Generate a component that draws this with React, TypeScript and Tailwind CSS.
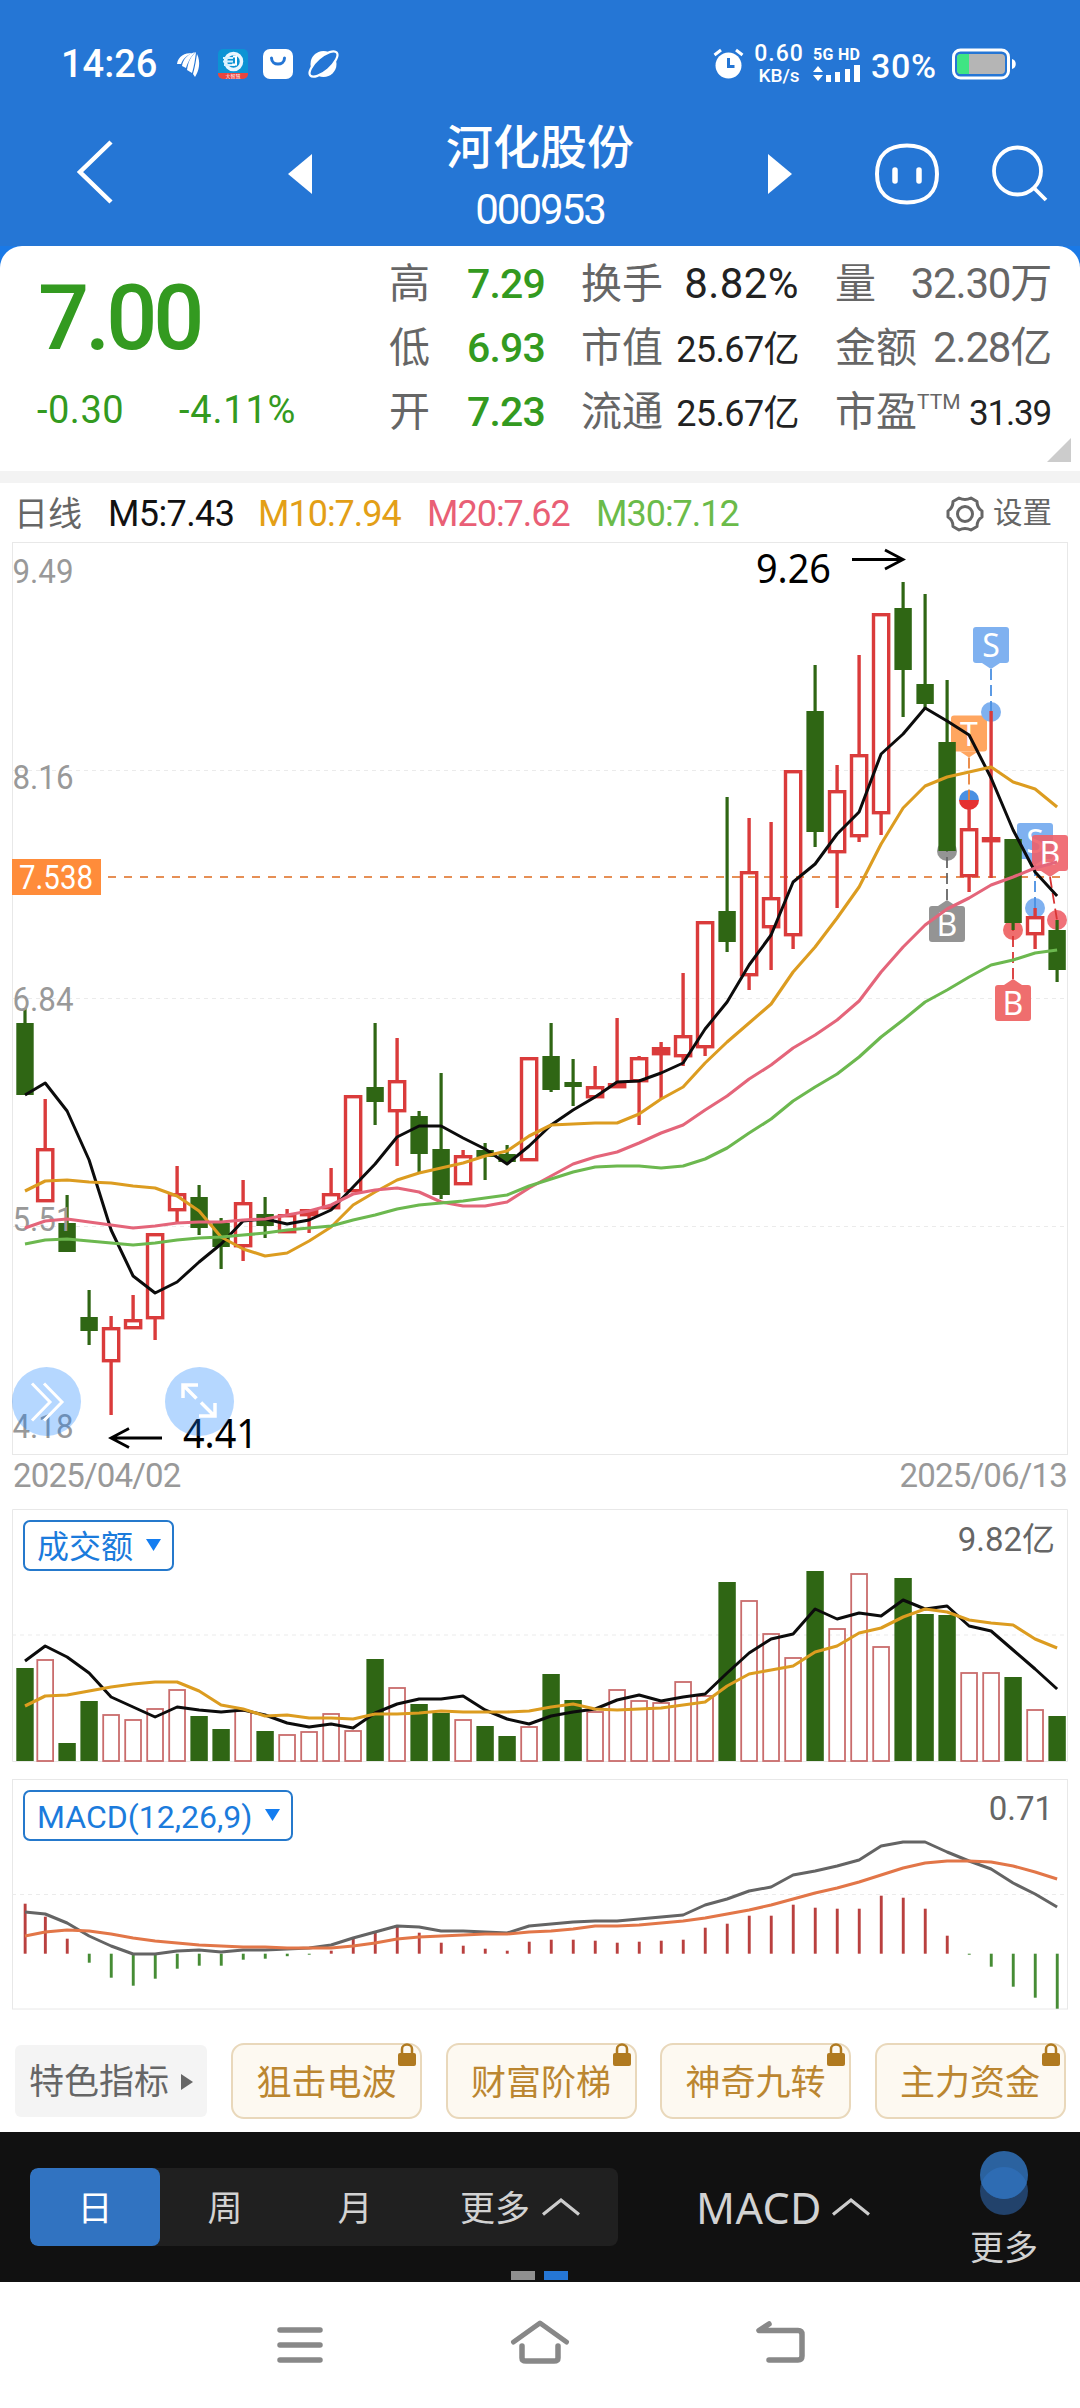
import React from 'react';

type Candle = [high: number, top: number, bottom: number, low: number, up: 0 | 1];

const candles: Candle[] = [
  [1008, 1023, 1095, 1095, 0], [1099, 1148, 1202, 1202, 1], [1195, 1223, 1252, 1252, 0], [1290, 1317, 1331, 1345, 0],
  [1316, 1327, 1362, 1415, 1], [1295, 1319, 1329, 1329, 1], [1233, 1233, 1319, 1340, 1], [1166, 1193, 1211, 1222, 1],
  [1185, 1197, 1228, 1235, 0], [1218, 1223, 1247, 1269, 0], [1180, 1202, 1247, 1261, 1], [1197, 1214, 1226, 1238, 0],
  [1209, 1214, 1233, 1233, 1], [1209, 1209, 1216, 1233, 1], [1168, 1193, 1209, 1209, 1], [1095, 1095, 1192, 1192, 1],
  [1023, 1087, 1102, 1125, 0], [1038, 1080, 1112, 1166, 1], [1111, 1116, 1154, 1172, 0], [1073, 1149, 1195, 1199, 0],
  [1150, 1155, 1185, 1185, 1], [1143, 1150, 1157, 1180, 0], [1145, 1154, 1162, 1162, 0], [1057, 1057, 1161, 1161, 1],
  [1023, 1056, 1090, 1092, 0], [1059, 1082, 1087, 1106, 0], [1066, 1086, 1098, 1098, 1], [1018, 1083, 1088, 1088, 1],
  [1056, 1057, 1082, 1125, 1], [1042, 1047, 1055, 1099, 1], [973, 1035, 1057, 1066, 1], [921, 921, 1048, 1056, 1],
  [797, 911, 942, 952, 0], [818, 871, 976, 990, 1], [822, 897, 928, 970, 1], [770, 770, 936, 949, 1],
  [665, 711, 832, 847, 0], [765, 790, 853, 908, 1], [655, 754, 837, 842, 1], [613, 613, 814, 835, 1],
  [582, 608, 670, 717, 0], [594, 684, 704, 709, 0], [680, 742, 851, 851, 0], [809, 828, 877, 892, 1],
  [711, 837, 842, 878, 1], [839, 839, 923, 930, 0], [908, 916, 935, 949, 1], [920, 930, 970, 982, 0],
];

const ma5 = [1095, 1083, 1111, 1160, 1230, 1276, 1293, 1282, 1262, 1244, 1221, 1219, 1224, 1220, 1210, 1187, 1164, 1137, 1126, 1126, 1138, 1149, 1164, 1146, 1125, 1110, 1097, 1082, 1081, 1073, 1063, 1029, 1002, 965, 935, 882, 864, 834, 812, 754, 734, 708, 721, 735, 778, 830, 872, 896];
const ma10 = [1191, 1181, 1180, 1182, 1183, 1186, 1188, 1196, 1211, 1237, 1249, 1256, 1253, 1241, 1227, 1205, 1192, 1180, 1173, 1168, 1163, 1156, 1151, 1136, 1125, 1124, 1123, 1123, 1114, 1099, 1087, 1063, 1042, 1023, 1004, 972, 947, 918, 887, 844, 808, 786, 777, 772, 767, 782, 789, 807];
const ma20 = [1228, 1221, 1219, 1222, 1225, 1228, 1226, 1223, 1222, 1222, 1220, 1219, 1215, 1211, 1205, 1194, 1190, 1188, 1192, 1202, 1206, 1206, 1202, 1188, 1176, 1164, 1157, 1152, 1143, 1133, 1125, 1110, 1096, 1079, 1065, 1048, 1035, 1020, 1001, 972, 947, 925, 909, 898, 885, 877, 868, 862];
const ma30 = [1244, 1240, 1239, 1241, 1243, 1245, 1243, 1240, 1238, 1237, 1235, 1233, 1230, 1228, 1226, 1220, 1215, 1209, 1205, 1203, 1201, 1198, 1195, 1186, 1179, 1172, 1167, 1166, 1166, 1168, 1166, 1159, 1148, 1133, 1119, 1101, 1087, 1074, 1057, 1037, 1020, 1002, 990, 977, 965, 960, 953, 950];

const volumes = [1668, 1659, 1743, 1701, 1714, 1719, 1708, 1689, 1716, 1729, 1710, 1731, 1734, 1731, 1713, 1730, 1659, 1687, 1704, 1713, 1719, 1726, 1736, 1726, 1674, 1700, 1711, 1689, 1700, 1702, 1681, 1695, 1582, 1600, 1633, 1657, 1571, 1628, 1573, 1646, 1578, 1614, 1615, 1672, 1672, 1677, 1709, 1716];
const vol5 = [1661, 1646, 1657, 1673, 1697, 1707, 1717, 1707, 1710, 1712, 1710, 1715, 1723, 1727, 1724, 1728, 1713, 1704, 1699, 1699, 1696, 1710, 1719, 1724, 1716, 1712, 1709, 1700, 1695, 1701, 1697, 1694, 1673, 1653, 1639, 1634, 1609, 1619, 1613, 1616, 1600, 1609, 1606, 1626, 1631, 1650, 1669, 1689];
const vol10 = [1706, 1696, 1695, 1691, 1687, 1684, 1682, 1682, 1691, 1705, 1709, 1716, 1715, 1718, 1718, 1719, 1714, 1714, 1713, 1711, 1712, 1712, 1712, 1711, 1707, 1704, 1709, 1710, 1709, 1708, 1705, 1702, 1686, 1674, 1670, 1666, 1652, 1646, 1633, 1628, 1617, 1609, 1612, 1620, 1623, 1625, 1639, 1648];

const macd = [50, 37, 15, -9, -24, -32, -25, -15, -12, -12, -6, -5, -2.5, -1, 3, 15, 22, 28, 21, 11, 8, 5, 3, 12, 14, 14, 13, 11, 12, 13, 14, 26, 30, 38, 38, 49, 46, 45, 45, 58, 56, 45, 18, -1, -13, -33, -44, -55];
const dif = [133, 135, 144, 157, 167, 175, 175, 172, 171, 173, 171, 171, 170, 169, 166, 159, 153, 147, 148, 152, 152, 153, 154, 147, 145, 143, 142, 142, 140, 138, 136, 126, 120, 112, 108, 96, 92, 87, 81, 67, 63, 63, 73, 82, 90, 104, 115, 128];
const dea = [157, 153, 151, 152, 155, 159, 162, 164, 166, 167, 168, 168, 169, 169, 169, 167, 164, 160, 158, 157, 156, 155, 155, 153, 152, 150, 147, 147, 146, 144, 142, 139, 135, 131, 126, 120, 114, 109, 103, 96, 89, 84, 82, 82, 83, 87, 93, 100];

const UP = '#da3b3b';
const DOWN = '#2f6614';

const xAt = (i: number) => (i === 0 ? 25 : i === 1 ? 45.2 : 67.1 + 22 * (i - 2));
const points = (ys: number[]) => ys.map((y, i) => `${xAt(i)},${y}`).join(' ');

function Line({ ys, color, width = 2.6 }: { ys: number[]; color: string; width?: number }) {
  return <polyline points={points(ys)} fill="none" stroke={color} strokeWidth={width} strokeLinejoin="round" />;
}

function Grid({ y }: { y: number }) {
  return <line x1="12" x2="1067" y1={y} y2={y} stroke="#ebebeb" strokeWidth="1" strokeDasharray="4 4" />;
}

interface MarkerProps {
  x: number;
  y: number;
  dotX: number;
  dotY: number;
  label: string;
  fill: string;
  stroke: string;
}

function Marker({ x, y, dotX, dotY, label, fill, stroke }: MarkerProps) {
  const below = dotY > y;
  const edge = below ? y + 36 : y;
  const tip = below ? edge + 6 : edge - 6;
  return (
    <g>
      {label === 'T' ? (
        <>
          <path d={`M${dotX - 10} ${dotY}a10 10 0 0 1 20 0z`} fill="#4a90e2" />
          <path d={`M${dotX - 10} ${dotY}a10 10 0 0 0 20 0z`} fill="#e53030" />
        </>
      ) : (
        <circle cx={dotX} cy={dotY} r="10" fill={fill} />
      )}
      <line x1={x + 18} y1={tip} x2={dotX} y2={dotY} stroke={stroke} strokeWidth="1.8" strokeDasharray="11 5" />
      <rect x={x} y={y} width="36" height="36" rx="3" fill={fill} />
      <path d={`M${x + 9} ${edge}L${x + 18} ${tip}L${x + 27} ${edge}z`} fill={fill} />
      <text x={x + 18} y={y + 30} fontSize="32" fill="#fff" textAnchor="middle" fontFamily="Noto Sans, sans-serif">
        {label}
      </text>
    </g>
  );
}

function AxisLabel({ y, children }: { y: number; children: string }) {
  return (
    <text x="12.5" y={y} fontSize="33.5" fill="#999" textLength="61" lengthAdjust="spacingAndGlyphs">
      {children}
    </text>
  );
}

function PriceChart() {
  return (
    <svg className="block font-['Roboto',sans-serif]" width="1080" height="926" viewBox="0 537 1080 926">
      <rect x="12.5" y="542.5" width="1055" height="912" fill="none" stroke="#e8e8e8" />
      <Grid y={770.5} />
      <Grid y={998.5} />
      <Grid y={1226.5} />
      <line x1="108" x2="1060" y1="877" y2="877" stroke="#e68f55" strokeWidth="2" strokeDasharray="8 8" />

      <Marker x={929} y={906} dotX={947} dotY={851} label="B" fill="#949494" stroke="#666" />
      <Marker x={951} y={715.5} dotX={969} dotY={800} label="T" fill="#ffa660" stroke="#e8833a" />
      <Marker x={973} y={627} dotX={991} dotY={712} label="S" fill="#7fb1f0" stroke="#4a90e2" />
      <Marker x={1017} y={823} dotX={1035} dotY={908} label="S" fill="#7fb1f0" stroke="#4a90e2" />
      <Marker x={995} y={985} dotX={1013} dotY={930} label="B" fill="#ef6e6e" stroke="#d93434" />
      <Marker x={1032} y={835} dotX={1057} dotY={920} label="B" fill="#ee6069e6" stroke="#d93434" />

      {candles.map(([high, top, bottom, low, up], i) => {
        const x = xAt(i);
        if (up) {
          return (
            <g key={i} stroke={UP} strokeWidth="3.4">
              <line x1={x} x2={x} y1={high} y2={top + 1} />
              <line x1={x} x2={x} y1={bottom - 1} y2={low} />
              <rect
                x={x - 7.6}
                y={top + 1.7}
                width="15.2"
                height={Math.max(bottom - top - 3, 1)}
                fill={bottom - top < 9 ? UP : 'none'}
              />
            </g>
          );
        }
        return (
          <g key={i} fill={DOWN}>
            <rect x={x - 1.6} y={high} width="3.2" height={low - high} />
            <rect x={x - 8.7} y={top} width="17.4" height={bottom - top} />
          </g>
        );
      })}

      <AxisLabel y={583}>9.49</AxisLabel>
      <AxisLabel y={789}>8.16</AxisLabel>
      <AxisLabel y={1011}>6.84</AxisLabel>
      <AxisLabel y={1231}>5.51</AxisLabel>
      <AxisLabel y={1438}>4.18</AxisLabel>

      <Line ys={ma5} color="#0c0c0c" width={3} />
      <Line ys={ma10} color="#dc9c20" width={3.1} />
      <Line ys={ma20} color="#e4657a" width={3.1} />
      <Line ys={ma30} color="#6cb84f" width={3.1} />

      <rect x="12" y="859" width="89" height="36" fill="#ff8c3a" />
      <text x="19" y="889" fontSize="33" fill="#fff" textLength="74" lengthAdjust="spacingAndGlyphs">7.538</text>

      <g stroke="#000" strokeWidth="2.8" fill="none">
        <path d="M852 559.5H902M885 550l18 9.500l-18 9.500" />
        <path d="M162 1438H112M129 1428.500l-18 9.500l18 9.500" />
      </g>
      <g className="font-['Noto_Sans',sans-serif]" fontSize="40" fill="#000">
        <text x="756" y="583" textLength="75" lengthAdjust="spacingAndGlyphs">9.26</text>
        <text x="183" y="1448" textLength="75" lengthAdjust="spacingAndGlyphs">4.41</text>
      </g>

      <circle cx="46.500" cy="1401.500" r="34.500" fill="#0a7aff" fillOpacity="0.3" />
      <circle cx="199.500" cy="1401.500" r="34.500" fill="#0a7aff" fillOpacity="0.3" />
      <g stroke="#fff" strokeWidth="3" fill="none">
        <path d="M32 1383.500l18 18.500l-18 18.500M44 1383.500l18 18.500l-18 18.500" />
        <path strokeWidth="3.500" d="M183 1398v-13h15M184 1386l12.500 12.500M215 1403v13h-16M201 1402.500l13 13" />
      </g>
    </svg>
  );
}

function VolumeChart() {
  return (
    <svg className="block" width="1080" height="253" viewBox="0 1509 1080 253">
      <path d="M12.5 1761.500V1509.500H1067.500V1761.500z" fill="none" stroke="#e8e8e8" />
      <Grid y={1635} />
      {volumes.map((top, i) =>
        candles[i][4] ? (
          <rect key={i} x={xAt(i) - 7.9} y={top + 1} width="15.8" height={1760 - top} fill="none" stroke="#c96c6c" strokeWidth="1.8" />
        ) : (
          <rect key={i} x={xAt(i) - 8.7} y={top} width="17.4" height={1761 - top} fill={DOWN} />
        )
      )}
      <Line ys={vol5} color="#0c0c0c" width={3} />
      <Line ys={vol10} color="#dc9c20" width={3.1} />
    </svg>
  );
}

function MacdChart() {
  return (
    <svg className="block" width="1080" height="231" viewBox="0 0 1080 231">
      <rect x="12.5" y="0.5" width="1055" height="229.5" fill="none" stroke="#e8e8e8" />
      <Grid y={115.5} />
      {macd.map((v, i) => (
        <rect
          key={i}
          x={xAt(i) - 1.3}
          y={v > 0 ? 174.7 - v : 174.7}
          width="2.9"
          height={Math.abs(v)}
          fill={v > 0 ? '#b9403f' : '#468c35'}
        />
      ))}
      <Line ys={dif} color="#646464" width={3} />
      <Line ys={dea} color="#e27648" width={3} />
    </svg>
  );
}

function StatusBar() {
  return (
    <div className="flex h-[100px] items-end pb-[16px] pl-[61px] pr-[62px] text-white">
      <div className="flex h-10 items-center">
        <span className="w-[116px] text-[38px] font-medium leading-none">14:26</span>
        <svg width="24" height="28" viewBox="0 0 24 28" fill="#fff">
          <path d="M0 14C1 6 8 3 15 3C9 6 6 9 4 14z" />
          <path d="M5 16C6 9 11 4 18 2C13 8 11 12 9 18z" />
          <path d="M10 20C11 12 14 6 19 2C18 10 17 16 15 23z" />
          <path d="M16 24C18 17 19 10 20 4C24 12 22 21 18 27z" />
        </svg>
        <svg className="ml-[17px]" width="30" height="30" viewBox="0 0 30 30">
          <rect width="30" height="30" rx="5" fill="#0c93d4" />
          <path d="M0 24h30v1a5 5 0 0 1-5 5H5a5 5 0 0 1-5-5z" fill="#e8453f" />
          <circle cx="15.500" cy="12.500" r="8" fill="none" stroke="#e8f6ff" strokeWidth="3.500" />
          <path d="M5 9h10M5 12.500h10M6 16h11" stroke="#d4effd" strokeWidth="2" fill="none" />
          <path d="M15 7.500h3v8h-4" stroke="#fff" strokeWidth="2" fill="none" />
          <text x="15" y="29" fontSize="5" fill="#fff" textAnchor="middle" fontFamily="Noto Sans CJK SC, sans-serif">大智慧</text>
        </svg>
        <svg className="ml-[15px]" width="30" height="30" viewBox="0 0 30 30">
          <rect width="30" height="30" rx="7" fill="#fff" />
          <path d="M8.500 9c0 8 13 8 13 0" fill="none" stroke="#2475d4" strokeWidth="3" strokeLinecap="round" />
        </svg>
        <svg className="ml-[15px]" width="32" height="30" viewBox="0 0 32 30">
          <circle cx="15.500" cy="15" r="13" fill="#fff" />
          <ellipse cx="15.500" cy="15" rx="17.500" ry="7" fill="#2576d5" stroke="#fff" strokeWidth="2.200" transform="rotate(-41 15.500 15)" />
        </svg>
      </div>
      <div className="ml-auto flex h-10 items-center">
        <svg className="mr-[10px]" width="31" height="32" viewBox="0 0 31 32">
          <circle cx="15.500" cy="17.500" r="13" fill="#fff" />
          <path d="M1.500 7L8 2M29.500 7L23 2" stroke="#fff" strokeWidth="3" />
          <path d="M15.500 10v8.500h6" stroke="#2475d4" strokeWidth="3" fill="none" />
        </svg>
        <div className="flex w-[50px] flex-col items-center font-medium">
          <span className="text-[23px] leading-[24px] tracking-[1px]">0.60</span>
          <span className="text-[19px] leading-[20px]">KB/s</span>
        </div>
        <div className="ml-[9px] w-[50px]">
          <div className="whitespace-nowrap text-[16px] font-bold leading-[17px] tracking-[0.3px]">5G HD</div>
          <svg className="mt-[2px]" width="48" height="17" viewBox="0 0 48 17" fill="#fff">
            <path d="M0 7l5-6l5 6zM0 10h10l-5 6zM13 10h5v7h-5zM22 7h5v10h-5zM32 4h5v13h-5zM41 0h6v17h-6z" />
          </svg>
        </div>
        <span className="ml-[8px] w-[75px] pt-[4px] text-[34px] font-medium leading-none tracking-[0.7px]">30%</span>
        <svg className="ml-[6px]" width="66" height="32" viewBox="0 0 66 32">
          <rect x="1.500" y="2" width="55" height="28" rx="7" fill="none" stroke="#fff" strokeWidth="3" />
          <path d="M60 11c5 1 5 9 0 10z" fill="#fff" />
          <rect x="5" y="6" width="48" height="20" rx="4" fill="#b5b5b5" />
          <path d="M9 6h8v20H9a4 4 0 0 1-4-4V10a4 4 0 0 1 4-4z" fill="#3fe583" />
        </svg>
      </div>
    </div>
  );
}

function Header() {
  return (
    <header className="h-[246px] bg-[#2576d5] text-white">
      <StatusBar />
      <div className="flex h-[146px] items-start">
        <svg className="ml-[74px] mt-[38px]" width="42" height="68" viewBox="0 0 42 68">
          <path d="M37 4L6 34L37 64" fill="none" stroke="#fff" strokeWidth="4.500" />
        </svg>
        <svg className="ml-[172px] mt-[54px]" width="24" height="40" viewBox="0 0 24 40">
          <path d="M24 0v40L0 20z" fill="#fff" />
        </svg>
        <div className="flex w-[456px] flex-col items-center">
          <h1 className="mt-[24px] text-[47px] font-medium leading-[48px]">河化股份</h1>
          <span className="mt-[17px] text-[42px] leading-[42px] tracking-[-2px]">000953</span>
        </div>
        <svg className="mt-[54px]" width="24" height="40" viewBox="0 0 24 40">
          <path d="M0 0v40l24-20z" fill="#fff" />
        </svg>
        <svg className="ml-[82px] mt-[42px]" width="66" height="64" viewBox="0 0 66 64" fill="none" stroke="#fff" strokeWidth="4">
          <path d="M33 3.500C52 3.500 63 13 63 32S52 60.500 33 60.500S3 51 3 32S14 3.500 33 3.500z" />
          <path strokeWidth="5.500" strokeLinecap="round" d="M21 28v11M45 28v11" />
        </svg>
        <svg className="ml-[52px] mt-[44px]" width="58" height="60" viewBox="0 0 58 60" fill="none" stroke="#fff" strokeWidth="3.800">
          <circle cx="25.500" cy="27" r="23.500" />
          <path d="M42 44l12 12" />
        </svg>
      </div>
    </header>
  );
}

function Quote() {
  return (
    <section className="bg-[#1a79e6]">
      <div className="relative flex h-[225px] rounded-t-[22px] bg-white pt-[6px] text-[41px] leading-none text-[#666]">
        <div className="w-[389px] text-[#339a20]">
          <div className="ml-[38px] mt-[23px] text-[90px] font-medium leading-[88px] tracking-[-4px]">7.00</div>
          <div className="ml-[37px] mt-[20px] flex text-[38px] leading-[54px]">
            <span className="w-[142px] tracking-[0.5px]">-0.30</span>
            <span className="tracking-[0.8px]">-4.11%</span>
          </div>
        </div>
        <div className="w-[156px]">
          {[['高', '7.29'], ['低', '6.93'], ['开', '7.23']].map(([label, value]) => (
            <div key={label} className="flex h-16 items-center justify-between">
              <span>{label}</span>
              <span className="font-medium tracking-[-0.800px] text-[#339a20]">{value}</span>
            </div>
          ))}
        </div>
        <div className="ml-[36px] w-[218px] text-[#222]">
          <div className="flex h-16 items-center justify-between">
            <span className="text-[#666]">换手</span>
            <span className="text-[42px] tracking-[0.4px]">8.82%</span>
          </div>
          <div className="flex h-16 items-center justify-between">
            <span className="text-[#666]">市值</span>
            <span className="pt-[3px] text-[36px] tracking-[-0.6px]">25.67亿</span>
          </div>
          <div className="flex h-16 items-center justify-between">
            <span className="text-[#666]">流通</span>
            <span className="pt-[3px] text-[36px] tracking-[-0.6px]">25.67亿</span>
          </div>
        </div>
        <div className="ml-[36px] w-[216px]">
          <div className="flex h-16 items-center justify-between">
            <span>量</span>
            <span className="text-[42px] tracking-[-1.2px]">32.30万</span>
          </div>
          <div className="flex h-16 items-center justify-between">
            <span>金额</span>
            <span className="text-[42px] tracking-[-1.2px]">2.28亿</span>
          </div>
          <div className="flex h-16 items-center justify-between">
            <span>
              市盈<span className="inline-block -translate-y-[17px] text-[21px]">TTM</span>
            </span>
            <span className="pt-[3px] text-[35px] tracking-[-1.2px] text-[#222]">31.39</span>
          </div>
        </div>
        <svg className="absolute bottom-[9px] right-[9px]" width="24" height="24" viewBox="0 0 24 24">
          <path d="M24 0v24H0z" fill="#ccc" />
        </svg>
      </div>
    </section>
  );
}

function MaBar() {
  return (
    <div className="flex h-[54px] items-center pl-[14px] pr-[28px] pt-[8px] text-[36px] leading-none text-[#666]">
      <span className="w-[94px] text-[34px]">日线</span>
      <span className="w-[150px] tracking-[-0.6px] text-[#111]">M5:7.43</span>
      <span className="w-[169px] tracking-[-1px] text-[#e39f17]">M10:7.94</span>
      <span className="w-[169px] tracking-[-1px] text-[#e95f76]">M20:7.62</span>
      <span className="tracking-[-1px] text-[#6bbb4a]">M30:7.12</span>
      <svg className="ml-auto" width="38" height="38" viewBox="0 0 38 38" fill="none" stroke="#666" strokeWidth="3">
        <path strokeLinejoin="round" d="M13 3q6 3 12 0l6 3.500q0 6.500 5 9.500v6q-5 3-5 9.500l-6 3.500q-6-3-12 0l-6-3.500q0-6.500-5-9.500v-6q5-3 5-9.500z" />
        <circle cx="19" cy="19" r="7.500" />
      </svg>
      <span className="ml-[9px] text-[29.500px]">设置</span>
    </div>
  );
}

function IndicatorButton({ children }: { children: string }) {
  return (
    <button className="flex h-[51px] items-center rounded-[7px] border-2 border-[#2579cc] bg-white pl-[12px] pr-[11px] pt-[2px] text-[32px] leading-none text-[#1b7bdc]">
      {children}
      <svg className="mb-[3px] ml-[13px]" width="15" height="12" viewBox="0 0 15 12">
        <path d="M0 0h15L7.500 12z" fill="#147df0" />
      </svg>
    </button>
  );
}

function LockedIndicator({ name }: { name: string }) {
  return (
    <div className="relative flex h-[76px] w-[191px] items-center justify-center rounded-[13px] border-2 border-[#e9d8bb] bg-[#fdf9f1] pt-[4px] text-[35px] leading-none text-[#bb8630]">
      {name}
      <svg className="absolute right-[3px] top-[-2px]" width="20" height="24" viewBox="0 0 20 24">
        <path d="M5 11V6a5 4.500 0 0 1 10 0v5" fill="none" stroke="#b07a20" strokeWidth="2.500" />
        <rect x="1" y="10" width="18" height="13" rx="2" fill="#b07a20" />
      </svg>
    </div>
  );
}

function ChevronUp() {
  return (
    <svg width="40" height="20" viewBox="0 0 40 20">
      <path d="M2 17.500L20 3L38 17.500" fill="none" stroke="#ccc" strokeWidth="3.200" />
    </svg>
  );
}

function PeriodBar() {
  return (
    <div className="relative flex h-[150px] bg-[#111] text-[35px] leading-none text-[#d2d2d2]">
      <div className="ml-[30px] mt-[36px] flex h-[78px] w-[588px] items-center overflow-hidden rounded-[8px] bg-[#202020]">
        <span className="flex h-full w-[130px] items-center justify-center rounded-[8px] bg-[#3173c1] pt-[4px] text-white">日</span>
        <span className="w-[130px] pt-[4px] text-center">周</span>
        <span className="w-[130px] pt-[4px] text-center">月</span>
        <span className="ml-[40px] mr-[11px] pt-[4px]">更多</span>
        <ChevronUp />
      </div>
      <div className="ml-[78px] mt-[36px] flex h-[78px] w-[260px] items-center gap-[9px] font-['Noto_Sans',sans-serif] text-[43px]">
        <span className="w-[126px] pt-[1px] tracking-[0.4px]">MACD</span>
        <ChevronUp />
      </div>
      <div className="flex w-[96px] flex-col items-center">
        <svg className="mt-[18px]" width="50" height="66" viewBox="0 0 50 66">
          <circle cx="25" cy="41" r="24" fill="#22426b" />
          <circle cx="25" cy="25" r="24" fill="#2b629f" />
          <path d="M2.400 33A24 24 0 0 1 47.600 33A24 24 0 0 1 2.400 33z" fill="#2e6cb3" />
        </svg>
        <span className="mt-[15px] text-[34px]">更多</span>
      </div>
      <div className="absolute bottom-[2px] left-[511px] flex gap-[9px]">
        <span className="h-[9px] w-[24px] bg-[#909090]" />
        <span className="h-[9px] w-[24px] bg-[#2576d5]" />
      </div>
    </div>
  );
}

function NavBar() {
  return (
    <nav className="flex h-[126px] bg-white pl-[276px] pt-[37px]">
      <svg width="48" height="48" viewBox="0 0 48 48" stroke="#888" strokeWidth="5.500" strokeLinecap="round">
        <path d="M4 11h40M4 26h40M4 41h40" />
      </svg>
      <svg className="ml-[186px]" width="60" height="48" viewBox="0 0 60 48" fill="none" stroke="#888" strokeWidth="5" strokeLinecap="round" strokeLinejoin="round">
        <path d="M3.500 23L30 4L56.500 23" />
        <path strokeWidth="5.500" d="M12 27v12q0 3 4 3h28q4 0 4-3V27" />
      </svg>
      <svg className="ml-[185px]" width="52" height="48" viewBox="0 0 52 48" fill="none" stroke="#888" strokeWidth="5.500" strokeLinecap="round" strokeLinejoin="round">
        <path d="M14 5L4 11.500H43q4 0 4 4V37q0 4-4 4H14" />
      </svg>
    </nav>
  );
}

export default function App() {
  return (
    <div className="w-[1080px] overflow-hidden bg-white font-['Roboto','Noto_Sans_CJK_SC',sans-serif]">
      <Header />
      <Quote />
      <div className="h-3 bg-[#f3f3f3]" />
      <MaBar />
      <PriceChart />
      <div className="flex h-[46px] justify-between px-[13px] text-[33px] leading-[25px] tracking-[-0.800px] text-[#999]">
        <span>2025/04/02</span>
        <span>2025/06/13</span>
      </div>
      <section className="relative">
        <VolumeChart />
        <div className="absolute inset-x-0 top-[11px] flex justify-between pl-[23px] pr-[25px] text-[33px] text-[#666]">
          <IndicatorButton>成交额</IndicatorButton>
          <span className="leading-[40px]">9.82亿</span>
        </div>
      </section>
      <section className="relative mt-[17px]">
        <MacdChart />
        <div className="absolute inset-x-0 top-[11px] flex justify-between pl-[23px] pr-[27px] text-[33px] text-[#666]">
          <IndicatorButton>MACD(12,26,9)</IndicatorButton>
          <span className="leading-[38px]">0.71</span>
        </div>
      </section>
      <div className="flex h-[122px] items-start pl-[15px] pt-[33px]">
        <div className="mr-[24px] mt-[2px] flex h-[72px] w-[192px] items-center rounded-[6px] bg-[#f4f4f4] pl-[14px] pt-[2px] text-[35px] leading-none text-[#666]">
          特色指标
          <svg className="ml-[12px]" width="12" height="16" viewBox="0 0 12 16">
            <path d="M0 0v16l12-8z" fill="#666" />
          </svg>
        </div>
        <div className="flex gap-[23.500px]">
          {['狙击电波', '财富阶梯', '神奇九转', '主力资金'].map((name) => (
            <LockedIndicator key={name} name={name} />
          ))}
        </div>
      </div>
      <PeriodBar />
      <NavBar />
    </div>
  );
}
